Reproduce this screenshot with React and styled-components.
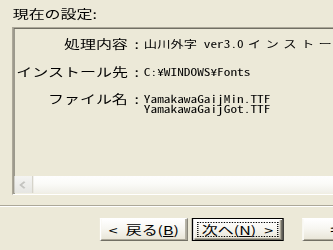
import React from "react";
import styled, { createGlobalStyle } from "styled-components";

const Global = createGlobalStyle`
  html, body { margin: 0; padding: 0; background: #ece9d8; overflow: hidden; }
  #root { width: 333px; height: 250px; overflow: hidden; }
`;

const Viewport = styled.div`
  width: 333px;
  height: 250px;
  overflow: hidden;
  background: #ece9d8;
`;

/* the reference is a 250px-wide dialog stretched to 333px */
const Stage = styled.div`
  width: 250px;
  height: 250px;
  transform: scaleX(1.332);
  transform-origin: 0 0;
  display: flex;
  flex-direction: column;
  font-family: "Noto Sans CJK JP", "Noto Sans", sans-serif;
  font-size: 12px;
  line-height: 12px;
  color: #000;
`;

const Title = styled.div`
  margin: 8px 0 0 9.5px;
  height: 12px;
  white-space: nowrap;
`;

const Frame = styled.div`
  margin: 7px 0 0 9px;
  width: 280px;
  height: 168px;
  box-sizing: border-box;
  border-top: 1px solid #aca899;
  border-left: 1px solid #aca899;
  border-bottom: 1px solid #ffffff;
  border-right: 1px solid #ffffff;
  box-shadow: inset 1px 1px 0 #716f64, inset -1px -1px 0 #f1efe2;
  padding: 1px;
  display: flex;
  flex-direction: column;
  overflow: hidden;
`;

const Details = styled.div`
  flex: 1;
  display: grid;
  grid-template-columns: 84px 12px 1fr;
  grid-auto-rows: auto;
  row-gap: 15.5px;
  align-content: start;
  padding: 9px 0 0 1px;
`;

const Label = styled.div`
  text-align: right;
  white-space: nowrap;
  height: 12px;
`;

const Colon = styled.div`
  padding-left: 5px;
`;

const Value = styled.div`
  font-family: "Noto Sans Mono CJK JP", "Noto Sans CJK JP", "Liberation Mono", monospace;
  font-size: 10px;
  line-height: 10px;
  margin-top: 1px;
  white-space: nowrap;
`;

const Kana = styled.span`
  letter-spacing: 3.3px;
  margin-left: -2px;
`;

const HScroll = styled.div`
  height: 17px;
  display: flex;
  background: linear-gradient(to bottom, #fefefe 0%, #fbfbf8 45%, #f0efe8 100%);
`;

const ScrollBtn = styled.div`
  width: 13.5px;
  height: 17px;
  box-sizing: border-box;
  display: flex;
  align-items: center;
  justify-content: center;
  background: linear-gradient(to bottom, #f4f4f2 0%, #e6e6e2 100%);
  border-right: 1px solid #d6d4ca;
`;

const Separator = styled.div`
  margin-top: 10px;
  height: 0;
  border-top: 1px solid #aca899;
  border-bottom: 1px solid #ffffff;
`;

const ButtonRow = styled.div`
  margin-top: 11px;
  padding-left: 75px;
  display: flex;
  align-items: flex-start;
`;

const Button = styled.button`
  width: ${(p) => p.$width}px;
  height: 23px;
  margin: 0 0 0 ${(p) => p.$gap || 0}px;
  padding: 0;
  box-sizing: border-box;
  flex: none;
  font: inherit;
  color: #000;
  display: flex;
  align-items: stretch;
  background: linear-gradient(to bottom, #ffffff 0%, #f7f6f1 45%, #e8e5d6 100%);
  border: 1px solid;
  border-color: ${(p) => (p.$default ? "#000" : "#ffffff #716f64 #716f64 #ffffff")};
  box-shadow: ${(p) =>
    p.$default
      ? "inset 1px 1px 0 #ffffff, inset -1px -1px 0 #716f64, inset -2px -2px 0 #aca899"
      : "inset -1px -1px 0 #aca899"};
  white-space: nowrap;
`;

const Face = styled.span`
  flex: 1;
  display: flex;
  align-items: center;
  justify-content: center;
  gap: 6px;
  margin: ${(p) => (p.$focus ? "3px" : "0")};
  padding-top: ${(p) => (p.$focus ? "0" : "1px")};
  border: ${(p) => (p.$focus ? "1px dotted #000" : "none")};
`;

export default function App() {
  return (
    <Viewport>
      <Global />
      <Stage>
        <Title>現在の設定:</Title>
        <Frame>
          <Details>
            <Label>処理内容</Label>
            <Colon>:</Colon>
            <Value>
              山川外字 ver3.0 <Kana>インストール</Kana>
            </Value>

            <Label>インストール先</Label>
            <Colon>:</Colon>
            <Value>C:¥WINDOWS¥Fonts</Value>

            <Label>ファイル名</Label>
            <Colon>:</Colon>
            <Value>
              YamakawaGaijMin.TTF
              <br />
              YamakawaGaijGot.TTF
            </Value>
          </Details>
          <HScroll>
            <ScrollBtn>
              <svg width="6" height="8" viewBox="0 0 6 8">
                <path d="M4.5 0.8 L1.5 4 L4.5 7.2" fill="none" stroke="#c4c4c0" strokeWidth="1.6" />
              </svg>
            </ScrollBtn>
          </HScroll>
        </Frame>
        <Separator />
        <ButtonRow>
          <Button $width={66}>
            <Face>
              <span>&lt;</span>
              <span>
                戻る(<u>B</u>)
              </span>
            </Face>
          </Button>
          <Button $width={69.5} $gap={2.5} $default>
            <Face $focus>
              <span>
                次へ(<u>N</u>)
              </span>
              <span>&gt;</span>
            </Face>
          </Button>
          <Button $width={100} $gap={14}>
            <Face>キャンセル</Face>
          </Button>
        </ButtonRow>
      </Stage>
    </Viewport>
  );
}
